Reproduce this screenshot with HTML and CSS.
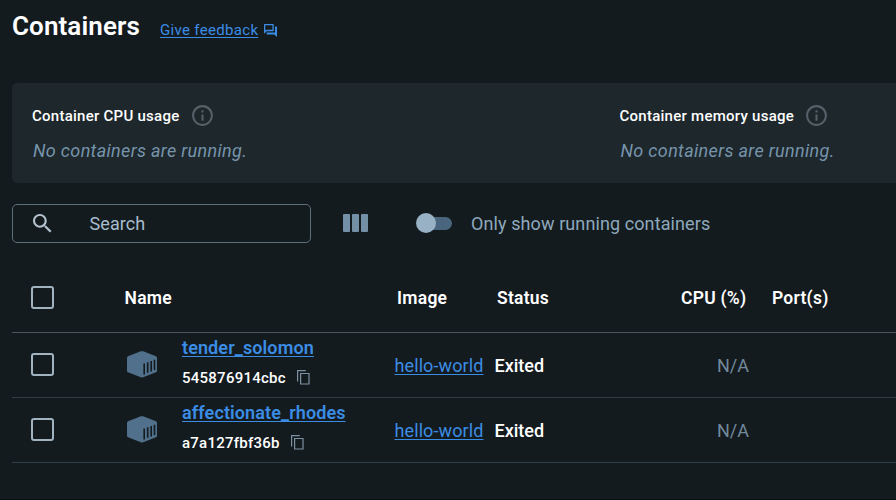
FILE: index.html
```html
<!DOCTYPE html>
<html lang="en">
<head>
<meta charset="utf-8">
<title>Containers</title>
<link rel="stylesheet" href="styles.css">
</head>
<body>
<svg width="0" height="0" class="defs">
  <symbol id="info" viewBox="0 0 24 24"><path d="M11 7h2v2h-2zm0 4h2v6h-2zm1-9C6.48 2 2 6.48 2 12s4.48 10 10 10 10-4.480 10-10S17.520 2 12 2m0 18c-4.410 0-8-3.590-8-8s3.590-8 8-8 8 3.590 8 8-3.590 8-8 8"/></symbol>
  <symbol id="copy" viewBox="0 0 13 15"><path d="M.6 11.500V.6H8.800M3.600 3.500h8.400v10.500H3.600z" fill="none" stroke="currentColor" stroke-width="1.200"/></symbol>
  <symbol id="box" viewBox="0 0 30 27"><path fill="currentColor" d="M13.800.3Q15 0 16.200.3L29 5.300Q30 5.800 30 7v12.800q0 1-1 1.500L16.200 26.300Q15 26.800 13.800 26.300L1 21.300Q0 20.800 0 19.800V7Q0 5.800 1 5.300z"/><path fill="none" stroke="#141b1f" stroke-width="1.600" d="M17.200 12.500V23.500M20.700 11.200V21.800M24.200 9.900V20.400M27.500 8.700V19"/></symbol>
</svg>
<main class="page">
  <header class="heading">
    <h1>Containers</h1>
    <a class="feedback" href="#">Give feedback</a>
    <svg class="chat" viewBox="2 2 20 20"><path d="M15 4v7H5.170L4 12.170V4zm1-2H3c-.55 0-1 .45-1 1v14l4-4h10c.55 0 1-.45 1-1V3c0-.55-.45-1-1-1m5 4h-2v9H6v2c0 .55.450 1 1 1h11l4 4V7c0-.55-.45-1-1-1"/></svg>
  </header>
  <section class="stats">
    <div class="stat">
      <div class="stat-title"><span>Container CPU usage</span><svg class="info"><use href="#info"/></svg></div>
      <p>No containers are running.</p>
    </div>
    <div class="stat">
      <div class="stat-title"><span>Container memory usage</span><svg class="info"><use href="#info"/></svg></div>
      <p>No containers are running.</p>
    </div>
  </section>
  <div class="toolbar">
    <div class="search">
      <svg viewBox="3 3 17.500 17.500"><path d="M15.500 14h-.79l-.28-.27C15.410 12.590 16 11.110 16 9.500 16 5.910 13.090 3 9.500 3S3 5.910 3 9.500 5.910 16 9.500 16c1.610 0 3.090-.59 4.230-1.570l.27.280v.79l5 4.990L20.490 19zm-6 0C7.010 14 5 11.990 5 9.500S7.010 5 9.500 5 14 7.010 14 9.500 11.990 14 9.500 14"/></svg>
      <span>Search</span>
    </div>
    <div class="columns"><i></i><i></i><i></i></div>
    <div class="switch"></div>
    <span class="switch-label">Only show running containers</span>
  </div>
  <div class="table">
    <div class="row head">
      <span class="check"></span>
      <span>Name</span>
      <span>Image</span>
      <span>Status</span>
      <span>CPU (%)</span>
      <span>Port(s)</span>
    </div>
    <div class="row">
      <span class="check"></span>
      <svg class="box"><use href="#box"/></svg>
      <div class="name"><a href="#">tender_solomon</a><div class="id"><span>545876914cbc</span><svg><use href="#copy"/></svg></div></div>
      <a class="image" href="#">hello-world</a>
      <span class="status">Exited</span>
      <span class="na">N/A</span>
    </div>
    <div class="row">
      <span class="check"></span>
      <svg class="box"><use href="#box"/></svg>
      <div class="name"><a href="#">affectionate_rhodes</a><div class="id"><span>a7a127fbf36b</span><svg><use href="#copy"/></svg></div></div>
      <a class="image" href="#">hello-world</a>
      <span class="status">Exited</span>
      <span class="na">N/A</span>
    </div>
  </div>
</main>
</body>
</html>
```
FILE: styles.css
```css
* { box-sizing: border-box; }
body {
  margin: 0;
  height: 500px;
  overflow: hidden;
  background: #141b1f;
  color: #fff;
  font-family: Roboto, sans-serif;
  font-size: 18px;
}
.defs { display: none; }
.page { padding-left: 12px; height: 500px; border-bottom: 1px solid #0c1013; }
a { color: #3b8ce4; text-decoration-thickness: 1px; text-underline-offset: 2px; }

.heading { display: flex; height: 83px; padding-top: 11px; }
h1 { margin: 0; width: 148px; font-size: 26px; line-height: 30px; font-weight: 600; letter-spacing: .1px; }
.feedback { width: 98px; margin-top: 9px; font-size: 15px; line-height: 20px; letter-spacing: .32px; white-space: nowrap; }
.chat { width: 13px; height: 13px; margin: 13px 0 0 6px; fill: #3b8ce4; }

.stats {
  display: grid;
  grid-template-columns: 587.5px 1fr;
  height: 100px;
  padding: 21px 0 0 20px;
  background: #1d272c;
  border-radius: 5px 0 0 5px;
}
.stat-title { display: flex; align-items: center; gap: 10px; height: 24px; font-size: 15px; font-weight: 500; letter-spacing: .26px; }
.info { width: 25px; height: 25px; margin-top: -1px; fill: #566069; }
.stat p { margin: 11px 0 0 1px; line-height: 24px; font-size: 18px; font-style: italic; letter-spacing: .34px; color: #7794ab; }

.toolbar { display: flex; align-items: center; height: 39px; margin-top: 21px; }
.search {
  display: flex;
  align-items: center;
  width: 299px;
  height: 39px;
  padding-left: 20px;
  border: 1px solid #5c6f7c;
  border-radius: 5px;
  color: #a7bccd;
  font-size: 18px;
  letter-spacing: .08px;
}
.search svg { width: 18.500px; height: 18.500px; margin-right: 38px; fill: #b3c2ce; }
.columns { display: flex; gap: 2px; margin: -1px 0 0 32px; }
.columns i { width: 7px; height: 18px; border-radius: 1px; background: #7390a7; }
.switch { position: relative; width: 32px; height: 13px; margin: 0 19px 0 52px; border-radius: 7px; background: #4a667f; }
.switch::before { content: ""; position: absolute; left: -4px; top: -4px; width: 20px; height: 20px; border-radius: 50%; background: #99b1c4; }
.switch-label { letter-spacing: .1px; color: #8ea9bc; white-space: nowrap; }

.table { margin-top: 20px; }
.row {
  display: grid;
  grid-template-columns: 103px 67px 212.500px 100px 186px 1fr;
  align-items: center;
  height: 65px;
  border-bottom: 1px solid #303e48;
}
.head { grid-template-columns: 112.500px 272.500px 100px 184px 91px 1fr; height: 70px; border-color: #4e565b; font-size: 17.500px; font-weight: 650; letter-spacing: .25px; }
.check { width: 23px; height: 23px; margin-left: 19px; border: 2px solid #a2b3c0; border-radius: 3px; }
.row:not(.head) .check { margin-top: -1px; }
.box { width: 30px; height: 27px; margin: -1px 0 0 12px; color: #50708b; }
.name { align-self: start; padding-top: 3px; }
.name a { display: block; width: max-content; font-weight: 650; line-height: 24px; letter-spacing: .11px; }
.id { display: flex; align-items: center; gap: 11px; height: 24px; margin-top: 6px; font-size: 15px; font-weight: 500; letter-spacing: .25px; }
.id svg { width: 13px; height: 15px; margin-top: -1px; color: #7c91a1; }
.image { letter-spacing: .1px; }
.image, .status, .na { padding-top: 1px; }
.status { font-weight: 500; }
.na { justify-self: start; margin-left: 36.500px; color: #72899b; }
```
